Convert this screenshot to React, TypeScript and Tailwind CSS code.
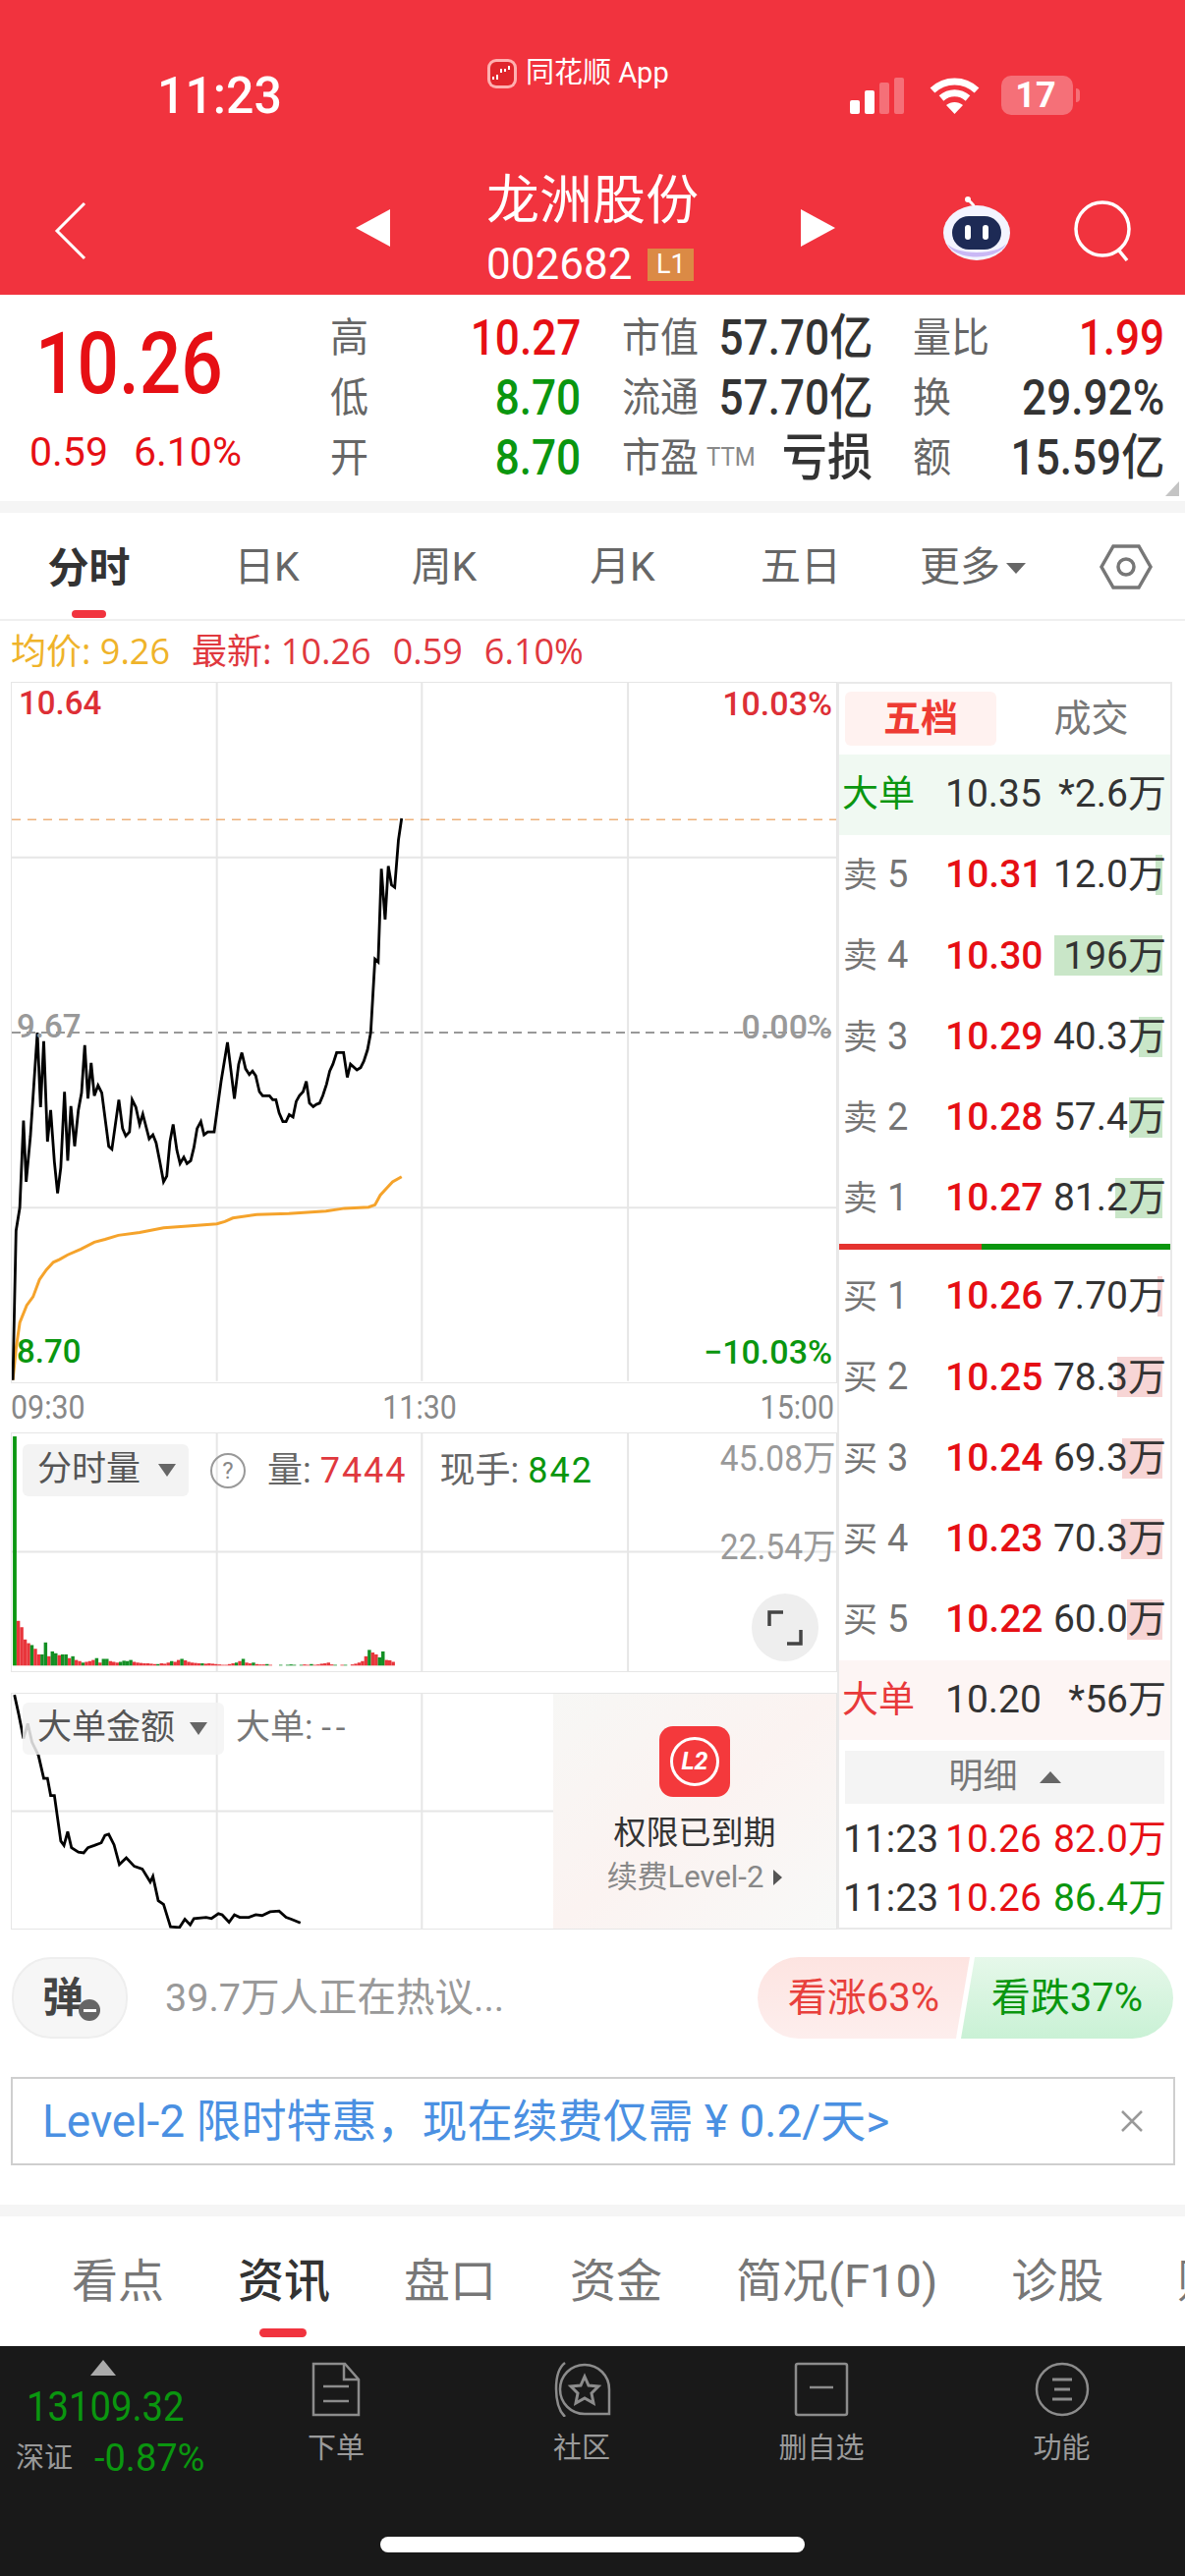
const RED = 'text-[#e60f14]';
const GREEN = 'text-[#0a960f]';

const priceLine =
  '22,1510 28,1250 35,1210 42,1058 47,1165 55,1085 68,905 74,1035 80,920 87,1095 93,1040 100,1130 106,1185 112,1140 119,1008 125,1128 131,1033 138,1103 145,1040 151,1010 157,927 163,1020 169,958 175,1015 182,997 189,1010 196,1060 202,1103 208,1108 221,1022 228,1072 234,1085 241,1078 246,1022 253,1035 260,1065 266,1047 278,1090 285,1083 291,1097 298,1130 305,1165 311,1155 317,1095 323,1065 330,1110 336,1133 343,1122 349,1133 356,1128 362,1105 368,1072 375,1060 381,1083 388,1078 400,1078 413,990 425,922 438,1020 446,960 452,940 459,968 466,978 472,972 478,980 485,1008 491,1015 504,1015 510,1022 516,1022 522,1045 529,1060 535,1060 541,1048 548,1052 554,1025 560,1015 567,1008 573,990 579,1028 586,1034 592,1030 598,1028 604,1015 611,995 617,972 623,960 630,940 643,940 650,983 656,960 668,970 675,966 681,955 688,935 694,905 702,777 708,782 714,620 721,708 727,615 733,648 739,652 746,570 752,532';
const avgLine =
  '22,1510 28,1455 35,1410 48,1380 60,1365 72,1335 85,1318 98,1305 110,1300 125,1292 150,1282 175,1270 195,1265 220,1258 260,1253 305,1245 350,1242 405,1238 420,1234 435,1228 480,1222 540,1220 610,1216 645,1211 690,1209 702,1205 712,1188 725,1175 735,1165 752,1156';
const orderLine =
  '25,848 33,900 42,965 50,925 58,975 70,1010 80,1072 87,1072 93,1118 100,1118 112,1240 118,1252 125,1215 132,1258 145,1270 155,1272 163,1258 175,1252 188,1245 195,1225 202,1222 212,1250 222,1303 235,1285 250,1308 265,1315 280,1350 285,1335 295,1400 305,1410 318,1470 335,1472 345,1450 355,1465 362,1448 385,1445 395,1448 408,1435 415,1438 428,1458 438,1438 448,1445 465,1445 478,1438 490,1440 505,1430 522,1428 535,1445 545,1450 562,1460';

// positive = red bar, negative = green bar
const volumes = [120,103,70,60,-55,45,30,-30,-62,25,-38,-33,28,-30,-30,20,-25,15,12,-8,10,12,15,-20,8,-18,-18,12,10,8,-10,-13,-12,-15,10,8,7,6,6,5,4,-4,6,5,8,-12,10,15,-18,14,10,8,7,6,-6,5,6,5,4,3,2,2,4,6,-8,12,-18,8,6,-8,4,3,3,-4,2,0,0,-2,0,-2,-3,-2,0,-2,3,2,-4,2,3,5,6,8,3,-2,0,2,-2,0,3,5,8,12,25,-42,35,30,-22,-38,15,14,10];

const asks = [
  { label: '卖', n: '5', price: '10.31', qty: '12.0万', left: 1176 },
  { label: '卖', n: '4', price: '10.30', qty: '196万', left: 1073 },
  { label: '卖', n: '3', price: '10.29', qty: '40.3万', left: 1159 },
  { label: '卖', n: '2', price: '10.28', qty: '57.4万', left: 1149 },
  { label: '卖', n: '1', price: '10.27', qty: '81.2万', left: 1135 },
];
const bids = [
  { label: '买', n: '1', price: '10.26', qty: '7.70万', left: 1178 },
  { label: '买', n: '2', price: '10.25', qty: '78.3万', left: 1137 },
  { label: '买', n: '3', price: '10.24', qty: '69.3万', left: 1142 },
  { label: '买', n: '4', price: '10.23', qty: '70.3万', left: 1141 },
  { label: '买', n: '5', price: '10.22', qty: '60.0万', left: 1147 },
];

const QuoteRow = ({ row, bar }: { row: (typeof asks)[number]; bar: string }) => (
  <div className="relative flex h-[82.4px] items-center pl-[4px] pr-[4px]">
    <div className={`absolute right-[8px] h-[41px] ${bar}`} style={{ width: 1183 - row.left }}></div>
    <span className="relative flex w-[104px] items-baseline gap-[10px] text-[35px] text-[#757575]">
      {row.label}
      <span className="text-[38px]">{row.n}</span>
    </span>
    <span className={`relative w-[94px] text-[39px] font-medium ${RED}`}>{row.price}</span>
    <span className="relative flex-1 whitespace-nowrap text-right text-[39px] text-[#333]">{row.qty}</span>
  </div>
);

const Stat = ({ label, value, color, size = 'text-[46px]' }: { label: React.ReactNode; value: string; color: string; size?: string }) => (
  <div className="flex h-[61px] items-center justify-between">
    <span className="flex items-center text-[39px] text-[#666] origin-left scale-y-[1.05]">{label}</span>
    <span className={`origin-right scale-x-[0.96] scale-y-[1.08] whitespace-nowrap font-medium ${size} ${color}`}>{value}</span>
  </div>
);

const ChartSvg = ({ box, children }: { box: string; children: React.ReactNode }) => (
  <svg className="absolute inset-0 h-full w-full" viewBox={box} preserveAspectRatio="none" fill="none">
    {children}
  </svg>
);

const Grid = ({ top, bottom, mid }: { top: number; bottom: number; mid: number[] }) => (
  <g stroke="#e6e6e6" strokeWidth="2">
    {[405, 790, 1177].map((x) => (
      <line key={x} x1={x} x2={x} y1={top} y2={bottom} vectorEffect="non-scaling-stroke" />
    ))}
    {mid.map((y) => (
      <line key={y} x1="0" x2="1568" y1={y} y2={y} vectorEffect="non-scaling-stroke" />
    ))}
  </g>
);

const BarTab = ({ text, width }: { text: string; width: string }) => (
  <div className={`flex h-full items-center justify-center pt-[4px] text-[41px] text-[#666] ${width}`}>{text}</div>
);

const Robot = () => (
  <svg width="72" height="66" viewBox="0 0 72 66">
    <path d="M34 12 C33 6 28 6 27 2" stroke="#fff" strokeWidth="3" fill="none" />
    <circle cx="27" cy="3" r="3" fill="#fff" />
    <ellipse cx="36" cy="37" rx="34" ry="28" fill="#f3f4ff" />
    <path d="M6 48 C14 66 58 66 66 48 C56 60 16 60 6 48Z" fill="#c9b8f5" />
    <rect x="11" y="20" width="50" height="34" rx="17" fill="#1d2a55" />
    <rect x="24" y="29" width="6" height="15" rx="3" fill="#fff" />
    <rect x="42" y="29" width="6" height="15" rx="3" fill="#fff" />
  </svg>
);

const App = () => {
  return (
    <div className="flex h-[2622px] w-[1206px] flex-col overflow-hidden bg-white font-['Roboto','Noto_Sans_CJK_SC',sans-serif]">
      {/* red header */}
      <header className="flex h-[300px] flex-col bg-[#f1333e] text-white">
        <div className="flex h-[170px] items-start">
          <div className="ml-[160px] mt-[67px] w-[125px] origin-left scale-y-[1.05] text-[50px] font-medium leading-[60px]">11:23</div>
          <div className="ml-[210px] mt-[55px] flex h-[40px] w-[188px] items-center gap-[8px] text-[29px]">
            <svg width="32" height="32" viewBox="0 0 32 32" className="shrink-0">
              <rect x="1" y="1" width="30" height="30" rx="9" fill="#ffb0b0" />
              <rect x="4" y="4" width="24" height="24" rx="6" fill="#e0252c" />
              <path d="M7 22v-3M11 22v-5M15 15v-4M19 14v-3M23 12V8" stroke="#fff" strokeWidth="2" />
            </svg>
            <span className="whitespace-nowrap">同花顺 App</span>
          </div>
          <div className="ml-[182px] mt-[79px] flex h-[37px] w-[57px] items-end gap-[5px]">
            <div className="h-[14px] w-[10px] rounded-[2px] bg-white"></div>
            <div className="h-[24px] w-[10px] rounded-[2px] bg-white"></div>
            <div className="h-[32px] w-[10px] rounded-[2px] bg-white/30"></div>
            <div className="h-[37px] w-[10px] rounded-[2px] bg-white/30"></div>
          </div>
          <svg className="ml-[24px] mt-[79px]" width="51" height="38" viewBox="0 0 51 38" fill="none" stroke="#fff">
            <path d="M3 13 C16 1 35 1 48 13" strokeWidth="7" />
            <path d="M12 21 C20 14 31 14 39 21" strokeWidth="7" />
            <path d="M25.5 37 L17 28 C22 24 29 24 34 28Z" fill="#fff" stroke="none" />
          </svg>
          <div className="ml-[22px] mt-[77px] flex h-[40px] w-[73px] overflow-hidden rounded-[10px] bg-white/30">
            <div className="flex w-[70px] items-center justify-center text-[36px] font-bold">17</div>
          </div>
          <div className="ml-[3px] mt-[90px] h-[14px] w-[4px] rounded-r-full bg-white/30"></div>
        </div>
        <div className="flex h-[130px] items-start">
          <svg className="ml-[55px] mt-[35px]" width="33" height="60" viewBox="0 0 33 60" fill="none" stroke="#fff" strokeWidth="3">
            <path d="M31 2L3 30L31 58" />
          </svg>
          <svg className="ml-[274px] mt-[43px]" width="35" height="38" viewBox="0 0 35 38">
            <path d="M35 0V38L0 19Z" fill="#fff" />
          </svg>
          <div className="ml-[98px] flex w-[320px] flex-col">
            <div className="mt-[5px] text-[54px] leading-[60px]">龙洲股份</div>
            <div className="mt-[15px] flex items-center gap-[16px]">
              <span className="text-[44px] leading-[38px]">002682</span>
              <span className="flex h-[33px] w-[47px] items-center justify-center bg-[#db8a45] text-[27px] leading-[33px]">L1</span>
            </div>
          </div>
          <svg className="mt-[43px]" width="35" height="38" viewBox="0 0 35 38">
            <path d="M0 0V38L35 19Z" fill="#fff" />
          </svg>
          <div className="ml-[108px] mt-[30px]">
            <Robot />
          </div>
          <svg className="ml-[62px] mt-[34px]" width="62" height="62" viewBox="0 0 62 62" fill="none" stroke="#fff" strokeWidth="3.5">
            <circle cx="30" cy="29" r="27" />
            <path d="M46 50 L55 61" />
          </svg>
        </div>
      </header>

      {/* quote summary */}
      <section className="relative flex h-[210px] pt-[14px]">
        <div className="w-[336px]">
          <div className={`ml-[36px] mt-[17px] w-fit origin-left scale-x-[0.89] scale-y-[1.04] text-[84px] font-medium leading-[80px] ${RED}`}>10.26</div>
          <div className={`ml-[30px] mt-[29px] flex gap-[26px] whitespace-nowrap text-[41px] leading-[40px] ${RED}`}>
            <span>0.59</span>
            <span>6.10%</span>
          </div>
        </div>
        <div className="w-[255px]">
          <Stat label="高" value="10.27" color={RED} />
          <Stat label="低" value="8.70" color={GREEN} />
          <Stat label="开" value="8.70" color={GREEN} />
        </div>
        <div className="ml-[42px] w-[255px]">
          <Stat label="市值" value="57.70亿" color="text-[#333]" />
          <Stat label="流通" value="57.70亿" color="text-[#333]" />
          <Stat
            label={
              <>
                市盈<span className="ml-[8px] text-[24px] text-[#888]">TTM</span>
              </>
            }
            value="亏损"
            color="text-[#333]"
            size="text-[48px]"
          />
        </div>
        <div className="ml-[41px] w-[256px]">
          <Stat label="量比" value="1.99" color={RED} />
          <Stat label="换" value="29.92%" color="text-[#333]" />
          <Stat label="额" value="15.59亿" color="text-[#333]" />
        </div>
        <div className="absolute bottom-[5px] right-[6px] h-0 w-0 border-b-[15px] border-l-[14px] border-b-[#c4c4c4] border-l-transparent"></div>
      </section>
      <div className="h-[12px] bg-[#f5f5f5]"></div>

      {/* period tabs */}
      <nav className="relative flex h-[110px] items-center border-b-2 border-[#efefef]">
        <div className="flex h-full w-[181px] items-center justify-center pt-[4px] text-[42px] font-bold text-[#333]">分时</div>
        <BarTab text="日K" width="w-[181px]" />
        <BarTab text="周K" width="w-[180px]" />
        <BarTab text="月K" width="w-[183px]" />
        <BarTab text="五日" width="w-[180px]" />
        <div className="flex h-full w-[170px] items-center justify-center gap-[6px] pt-[4px] text-[41px] text-[#666]">
          更多
          <span className="h-0 w-0 border-x-[10px] border-t-[11px] border-x-transparent border-t-[#666]"></span>
        </div>
        <svg width="54" height="46" viewBox="0 0 54 46" fill="none" stroke="#777" strokeWidth="3.5" className="ml-[44px] mt-[2px]">
          <path d="M14 2H40L52 23L40 44H14L2 23Z" />
          <circle cx="27" cy="23" r="8" />
        </svg>
        <div className="absolute bottom-[1px] left-[73px] h-[8px] w-[35px] rounded-full bg-[#f1333e]"></div>
      </nav>

      {/* legend */}
      <div className="flex h-[62px] items-center gap-[22px] whitespace-nowrap pl-[11px] font-['Open_Sans','Noto_Sans_CJK_SC',sans-serif] text-[36px]">
        <span className="text-[#efb32a]">均价: 9.26</span>
        <div className="flex gap-[22px] text-[#e0383e]">
          <span>最新: 10.26</span>
          <span>0.59</span>
          <span>6.10%</span>
        </div>
      </div>

      {/* charts and order book */}
      <main className="ml-[11px] flex h-[1270px] w-[1182px]">
        <div className="flex w-[841px] flex-col">
          <div className="relative h-[714px] border border-[#e6e6e6]">
            <ChartSvg box="20 296 1548 1218">
              <Grid top={296} bottom={1512} mid={[600, 1210]} />
              <line x1="20" x2="1568" y1="534" y2="534" stroke="#eeb27c" strokeWidth="1.5" strokeDasharray="9 7" vectorEffect="non-scaling-stroke" />
              <line x1="20" x2="1568" y1="905" y2="905" stroke="#777" strokeWidth="1.5" strokeDasharray="9 6" vectorEffect="non-scaling-stroke" />
              <polyline points={avgLine} stroke="#f5a32b" strokeWidth="3" vectorEffect="non-scaling-stroke" />
              <polyline points={priceLine} stroke="#000" strokeWidth="2.8" vectorEffect="non-scaling-stroke" />
            </ChartSvg>
            <span className="absolute left-[7px] top-[2px] text-[33px] font-medium leading-[38px] text-[#dd2f36]">10.64</span>
            <span className="absolute right-[4px] top-[2px] text-[34px] font-medium leading-[38px] text-[#dd2f36]">10.03%</span>
            <span className="absolute left-[5px] top-[331px] text-[33px] font-medium leading-[38px] text-[#999]">9.67</span>
            <span className="absolute right-[4px] top-[331px] text-[34px] font-medium leading-[38px] text-[#999]">0.00%</span>
            <span className={`absolute left-[5px] top-[662px] text-[33px] font-medium leading-[38px] ${GREEN}`}>8.70</span>
            <span className={`absolute right-[4px] top-[662px] text-[34px] font-medium leading-[38px] ${GREEN}`}>−10.03%</span>
          </div>
          <div className="flex h-[50px] items-center justify-between pr-[3px] text-[33px] text-[#888]">
            <span className="origin-left scale-x-[0.92]">09:30</span>
            <span className="origin-center -translate-x-[3px] scale-x-[0.92]">11:30</span>
            <span className="origin-right scale-x-[0.92]">15:00</span>
          </div>
          <div className="relative h-[244px] border border-[#e6e6e6]">
            <ChartSvg box="20 152 1548 638">
              <Grid top={152} bottom={790} mid={[470]} />
              <rect x="22" y="160" width="7" height="615" fill="#0a960f" />
              {volumes.map((v, i) => (
                <rect key={i} x={29 + i * 6.4} y={775 - Math.abs(v)} width="6.4" height={Math.abs(v)} fill={v > 0 ? '#e8353b' : '#138f24'} />
              ))}
            </ChartSvg>
            <div className="absolute left-[11px] top-[11px] flex h-[53px] w-[169px] items-center gap-[18px] rounded-[6px] bg-[#f3f3f3] pl-[15px] text-[35px] text-[#555]">
              分时量
              <span className="h-0 w-0 border-x-[9px] border-t-[13px] border-x-transparent border-t-[#666]"></span>
            </div>
            <div className="absolute left-[202px] top-[20px] flex h-[36px] w-[36px] items-center justify-center rounded-full border-2 border-[#999] text-[24px] text-[#888]">?</div>
            <div className="absolute left-[260px] top-[17px] flex gap-[33px] whitespace-nowrap text-[36px] leading-[42px] text-[#666]">
              <span>
                量: <span className="tracking-[2px] text-[#e0383e]">7444</span>
              </span>
              <span>
                现手: <span className={`tracking-[2px] ${GREEN}`}>842</span>
              </span>
            </div>
            <span className="absolute right-[1px] top-[6px] origin-right scale-x-[0.93] text-[36px] leading-[40px] text-[#999]">45.08万</span>
            <span className="absolute right-[1px] top-[96px] origin-right scale-x-[0.93] text-[36px] leading-[40px] text-[#999]">22.54万</span>
            <div className="absolute left-[753px] top-[163px] flex h-[69px] w-[68px] items-center justify-center rounded-full bg-[#eeeeee]">
              <svg width="36" height="36" viewBox="0 0 36 36" fill="none" stroke="#444" strokeWidth="3.5">
                <path d="M2 16V2H16M34 20V34H20" />
              </svg>
            </div>
          </div>
          <div className="relative mt-[21px] h-[241px] border border-[#e6e6e6]">
            <ChartSvg box="20 845 1548 630">
              <Grid top={845} bottom={1475} mid={[1160]} />
              <polyline points={orderLine} stroke="#000" strokeWidth="2.8" vectorEffect="non-scaling-stroke" />
            </ChartSvg>
            <div className="absolute left-[11px] top-[9px] flex h-[53px] w-[205px] items-center gap-[15px] rounded-[6px] bg-[#f3f3f3]/85 pl-[15px] text-[35px] text-[#555]">
              大单金额
              <span className="h-0 w-0 border-x-[9px] border-t-[13px] border-x-transparent border-t-[#666]"></span>
            </div>
            <span className="absolute left-[228px] top-[14px] whitespace-nowrap text-[35px] leading-[42px] text-[#777]">
              大单: <span className="tracking-[5px]">--</span>
            </span>
            <div className="absolute bottom-0 right-0 top-0 flex w-[288px] flex-col items-center bg-gradient-to-br from-[#f7f7f5] via-[#fbf3f1] to-[#f8f9f8]">
              <div className="mt-[33px] flex h-[72px] w-[72px] items-center justify-center rounded-[14px] bg-[#f4393c]">
                <div className="flex h-[50px] w-[50px] items-center justify-center rounded-full border-[3px] border-white text-[25px] font-bold italic text-white">L2</div>
              </div>
              <div className="mt-[17px] text-[33px] leading-[40px] text-[#333]">权限已到期</div>
              <div className="mt-[7px] flex items-center gap-[10px] whitespace-nowrap text-[31px] leading-[36px] text-[#888]">
                续费Level-2
                <span className="h-0 w-0 border-y-[8px] border-l-[9px] border-y-transparent border-l-[#555]"></span>
              </div>
            </div>
          </div>
        </div>

        <div className="flex h-[1270px] w-[341px] flex-col border-2 border-[#e9e9e9]">
          <div className="flex h-[72px] items-start pl-[6px]">
            <div className="mt-[8px] flex h-[55px] w-[154px] items-center justify-center rounded-[6px] bg-[#fff2f0] text-[38px] font-bold text-[#ee3b33]">五档</div>
            <div className="mt-[8px] flex h-[55px] flex-1 items-center justify-center pl-[16px] text-[38px] text-[#777]">成交</div>
          </div>
          <div className="flex h-[82px] items-center bg-[#f0f9f2] pl-[3px] pr-[4px] text-[39px] text-[#333]">
            <span className={`w-[105px] text-[37px] ${GREEN}`}>大单</span>
            <span className="w-[94px]">10.35</span>
            <span className="flex-1 whitespace-nowrap text-right">*2.6万</span>
          </div>
          {asks.map((r) => (
            <QuoteRow key={r.n} row={r} bar="bg-[#c9e6c8]" />
          ))}
          <div className="mt-[5px] flex h-[6px]">
            <div className="w-[145px] bg-[#e5332f]"></div>
            <div className="flex-1 bg-[#0a960f]"></div>
          </div>
          <div className="h-[7px]"></div>
          {bids.map((r) => (
            <QuoteRow key={r.n} row={r} bar="bg-[#f7d5d5]" />
          ))}
          <div className="flex h-[82px] items-center bg-[#fdf5f4] pl-[3px] pr-[4px] text-[39px] text-[#333]">
            <span className="w-[105px] text-[37px] text-[#e8393a]">大单</span>
            <span className="w-[94px]">10.20</span>
            <span className="flex-1 whitespace-nowrap text-right">*56万</span>
          </div>
          <div className="mx-[6px] mt-[11px] flex h-[54px] items-center justify-center gap-[22px] bg-[#f4f4f4] text-[35px] text-[#777]">
            明细
            <span className="h-0 w-0 border-x-[11px] border-b-[12px] border-x-transparent border-b-[#666]"></span>
          </div>
          <div className="mt-[6px] flex h-[60px] items-center pl-[4px] pr-[4px] text-[39px] text-[#333]">
            <span className="w-[104px]">11:23</span>
            <span className={`w-[94px] ${RED}`}>10.26</span>
            <span className={`flex-1 whitespace-nowrap text-right ${RED}`}>82.0万</span>
          </div>
          <div className="flex h-[60px] items-center pl-[4px] pr-[4px] text-[39px] text-[#333]">
            <span className="w-[104px]">11:23</span>
            <span className={`w-[94px] ${RED}`}>10.26</span>
            <span className={`flex-1 whitespace-nowrap text-right ${GREEN}`}>86.4万</span>
          </div>
        </div>
      </main>

      {/* comment bar */}
      <div className="mt-[28px] flex h-[83px] items-center pl-[12px] pr-[12px]">
        <div className="relative flex h-[83px] w-[118px] items-center justify-center rounded-[40px] border-2 border-[#eeeeee] bg-[#f6f6f6]">
          <span className="-ml-[14px] text-[42px] font-bold text-[#444]">弹</span>
          <span className="absolute bottom-[16px] right-[26px] flex h-[22px] w-[22px] items-center justify-center rounded-full bg-[#666]">
            <span className="h-[3px] w-[13px] bg-white"></span>
          </span>
        </div>
        <div className="ml-[38px] flex-1 whitespace-nowrap text-[39.5px] text-[#999]">39.7万人正在热议...</div>
        <div className="flex h-[83px] w-[216px] items-center justify-center rounded-l-[42px] bg-gradient-to-b from-[#fde4e1] to-[#fdeeed] text-[40px] text-[#e8403c] [clip-path:polygon(0_0,100%_0,93.5%_100%,0_100%)]">
          看涨63%
        </div>
        <div className="-ml-[9px] flex h-[83px] w-[216px] items-center justify-center rounded-r-[42px] bg-gradient-to-b from-[#e6f8ea] to-[#c9f1d5] text-[40px] text-[#0a960f] [clip-path:polygon(6.5%_0,100%_0,100%_100%,0_100%)]">
          看跌37%
        </div>
      </div>

      {/* renew banner */}
      <div className="ml-[11px] mt-[39px] flex h-[90px] w-[1185px] items-center justify-between border-2 border-[#cfcfcf] pl-[30px] pr-[30px]">
        <span className="whitespace-nowrap text-[46px] text-[#4a90e2]">Level-2 限时特惠，现在续费仅需 ¥ 0.2/天&gt;</span>
        <svg width="24" height="24" viewBox="0 0 24 24" stroke="#999" strokeWidth="2.5">
          <path d="M2 2L22 22M22 2L2 22" />
        </svg>
      </div>
      <div className="mt-[40px] h-[12px] bg-[#f5f5f5]"></div>

      {/* info tabs */}
      <nav className="relative flex h-[132px] items-center gap-[75px] overflow-hidden whitespace-nowrap pl-[73px] text-[47px] text-[#777]">
        <span>看点</span>
        <span className="font-medium text-[#333]">资讯</span>
        <span>盘口</span>
        <span>资金</span>
        <span>简况(F10)</span>
        <span>诊股</span>
        <span>财务</span>
        <div className="absolute bottom-[9px] left-[264px] h-[9px] w-[48px] rounded-full bg-[#f1333e]"></div>
      </nav>

      {/* bottom toolbar */}
      <footer className="flex h-[234px] flex-col bg-[#191919]">
        <div className="flex h-[194px] text-[#9a9a9a]">
          <div className="flex w-[217px] flex-col">
            <div className="ml-[92px] mt-[14px] h-0 w-0 border-x-[13px] border-b-[16px] border-x-transparent border-b-[#aaa]"></div>
            <div className={`ml-[27px] mt-[10px] origin-left scale-x-[0.91] whitespace-nowrap text-[42px] leading-[44px] ${GREEN}`}>13109.32</div>
            <div className="ml-[16px] mt-[2px] flex items-center gap-[22px] whitespace-nowrap">
              <span className="text-[29px] text-[#999]">深证</span>
              <span className={`text-[38px] ${GREEN}`}>-0.87%</span>
            </div>
          </div>
          <div className="flex w-[250px] flex-col items-center pt-[16px]">
            <svg width="50" height="56" viewBox="0 0 50 56" fill="none" stroke="#8c8c8c" strokeWidth="2.5">
              <path d="M2 2H34L48 18V54H2Z" />
              <path d="M33 3V18H48M12 25H38M12 40H38" />
            </svg>
            <span className="mt-[11px] text-[29px]">下单</span>
          </div>
          <div className="flex w-[250px] flex-col items-center pt-[16px]">
            <svg width="62" height="56" viewBox="0 0 62 56" fill="none" stroke="#8c8c8c" strokeWidth="2.5">
              <path d="M14 1C2 10 2 44 14 56" />
              <path d="M34 3C48 3 59 14 59 28V53H34C20 53 9 42 9 28C9 14 20 3 34 3Z" />
              <path d="M34 15L38 24L48 25L41 32L43 42L34 37L25 42L27 32L20 25L30 24Z" strokeWidth="3" />
            </svg>
            <span className="mt-[11px] text-[29px]">社区</span>
          </div>
          <div className="flex w-[238px] flex-col items-center pt-[16px]">
            <svg width="56" height="56" viewBox="0 0 56 56" fill="none" stroke="#8c8c8c" strokeWidth="2.5">
              <rect x="2" y="2" width="52" height="52" rx="2" />
              <path d="M16 26H40" />
            </svg>
            <span className="mt-[11px] text-[29px]">删自选</span>
          </div>
          <div className="flex w-[251px] flex-col items-center pt-[16px]">
            <svg width="56" height="56" viewBox="0 0 56 56" fill="none" stroke="#8c8c8c" strokeWidth="2.5">
              <circle cx="28" cy="28" r="26" />
              <path d="M18 18H38M20 28H36M18 38H38" strokeWidth="3" />
            </svg>
            <span className="mt-[11px] text-[29px]">功能</span>
          </div>
        </div>
        <div className="mx-auto h-[16px] w-[432px] rounded-full bg-white"></div>
      </footer>
    </div>
  );
};

export default App;
